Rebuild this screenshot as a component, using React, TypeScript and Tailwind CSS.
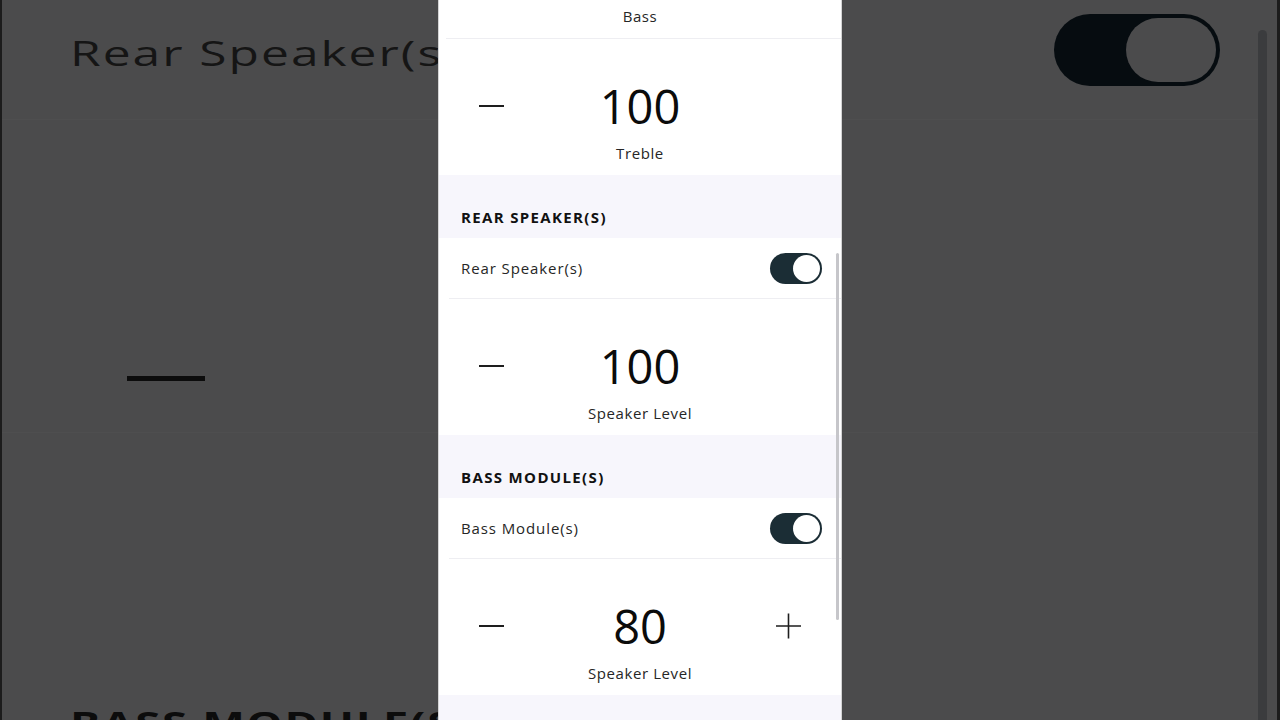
import React from "react";

const sans = "font-['Open_Sans',_'Noto_Sans',_sans-serif]";

function Minus() {
	return <div className="w-[25px] h-[1.5px] bg-[#1e1e1e]" />;
}

function Plus() {
	return (
		<svg width="25" height="26" viewBox="0 0 25 26" fill="none">
			<path d="M0 13h25M12.5 0.5v25" stroke="#1e1e1e" strokeWidth="1.6" />
		</svg>
	);
}

function Toggle() {
	return (
		<div className="w-[52px] h-[31px] rounded-full bg-[#1b2d35] p-[2px] flex justify-end">
			<div className="w-[27px] h-[27px] rounded-full bg-white" />
		</div>
	);
}

function Stepper({ value, label, plus }: { value: string; label: string; plus?: boolean }) {
	return (
		<div className="h-[136px] px-[40px] pt-[43px] flex flex-col items-center bg-white">
			<div className="w-full h-[48px] flex items-center justify-between">
				<Minus />
				<span className="text-[47px] leading-none text-[#0b0b0b]">{value}</span>
				{plus ? <Plus /> : <span className="w-[25px]" />}
			</div>
			<div className="mt-[13px] text-[15px] leading-[20px] text-[#262626] tracking-[0.04em]">{label}</div>
		</div>
	);
}

function Section({ title, label, value, plus }: { title: string; label: string; value: string; plus?: boolean }) {
	return (
		<>
			{/* cabeçalho da seção */}
			<div className="h-[63px] pl-[22px] pt-[32px] bg-[#f7f6fc]">
				<p className="text-[15px] leading-[20px] font-bold tracking-[0.09em] text-[#111]">{title}</p>
			</div>
			<div className="h-[60px] flex items-center justify-between pl-[22px] pr-[19px] bg-white">
				<span className="text-[15px] tracking-[0.06em] text-[#262626]">{label}</span>
				<Toggle />
			</div>
			<div className="bg-white pl-[10px]">
				<div className="border-t border-[#eeeef2]" />
			</div>
			<Stepper value={value} label="Speaker Level" plus={plus} />
		</>
	);
}

export default function App() {
	return (
		<div className={`relative w-[1280px] h-[720px] overflow-hidden bg-[#4b4b4c] ${sans}`}>
			{/* fundo ampliado e escurecido */}
			<div className="absolute inset-0 flex">
				<div className="w-[2px] bg-[#1c1c1c]" />
				<div className="flex-1 flex flex-col overflow-hidden">
					<div className="shrink-0 h-[120px] flex items-start justify-between pl-[68px] pr-[38px] pt-[14px] border-b border-[#4e4e4f]">
						<div className="h-[76px] flex items-center">
							<span className="text-[35px] leading-none text-[#151515] scale-x-[1.42] origin-left whitespace-nowrap tracking-[0.04em]">
								Rear Speaker(s)
							</span>
						</div>
						<div className="w-[166px] h-[72px] rounded-full bg-[#060c10] p-[4px] flex justify-end">
							<div className="w-[90px] h-[64px] rounded-full bg-[#4b4b4c]" />
						</div>
					</div>
					<div className="shrink-0 h-[313px] pl-[125px] pt-[256px] border-b border-[#4e4e4f]">
						<div className="w-[78px] h-[5px] bg-[#0c0c0c]" />
					</div>
					<div className="shrink-0 pl-[68px] pt-[273px]">
						<span className="block text-[33px] leading-none font-bold text-[#0c0c0c] scale-x-[1.37] origin-left whitespace-nowrap tracking-[0.04em]">
							BASS MODULE(S)
						</span>
					</div>
				</div>
				<div className="w-[9px] pt-[30px]">
					<div className="h-full rounded-t-full bg-[#3b3c3e]" />
				</div>
				<div className="w-[10px]" />
				<div className="w-[3px] bg-[#1c1c1c]" />
			</div>

			{/* tela do telefone */}
			<div className="relative z-10 mx-auto w-[404px] h-full overflow-hidden bg-white border-x border-[#d4d4d4]">
				<div className="h-[38px] pt-[6px] flex justify-center">
					<span className="text-[15px] leading-[20px] tracking-[0.04em] text-[#262626]">Bass</span>
				</div>
				<div className="pl-[7px]">
					<div className="border-t border-[#eeeef2]" />
				</div>
				<Stepper value="100" label="Treble" />
				<Section title="REAR SPEAKER(S)" label="Rear Speaker(s)" value="100" />
				<Section title="BASS MODULE(S)" label="Bass Module(s)" value="80" plus />
				<div className="h-[40px] bg-[#f7f6fc]" />

				{/* barra de rolagem */}
				<div className="absolute right-[2px] top-[253px] w-[3px] h-[367px] rounded-full bg-[#c6c6ca]" />
			</div>
		</div>
	);
}
